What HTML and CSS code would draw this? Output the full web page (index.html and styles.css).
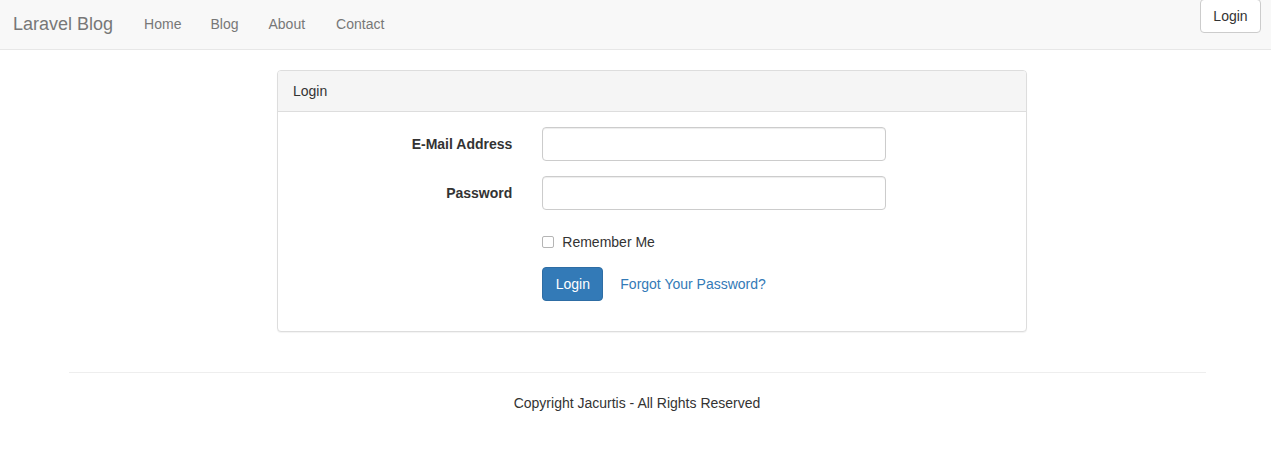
FILE: index.html
```html
<!DOCTYPE html>
<html>
<head>
<meta charset="utf-8">
<link rel="stylesheet" href="styles.css">
</head>
<body>
<nav class="navbar">
  <div class="nav-left">
    <a class="brand" href="#">Laravel Blog</a>
    <a class="nav-link" href="#">Home</a>
    <a class="nav-link" href="#">Blog</a>
    <a class="nav-link" href="#">About</a>
    <a class="nav-link" href="#">Contact</a>
  </div>
  <a class="btn btn-default nav-login" href="#">Login</a>
</nav>

<main class="main">
  <div class="panel">
    <div class="panel-heading">Login</div>
    <div class="panel-body">
      <form class="form">
        <div class="form-group">
          <label class="control-label">E-Mail Address</label>
          <div class="field"><input class="form-control" type="email"></div>
        </div>
        <div class="form-group">
          <label class="control-label">Password</label>
          <div class="field"><input class="form-control" type="password"></div>
        </div>
        <div class="form-group">
          <div class="spacer"></div>
          <div class="field checkbox">
            <label><input type="checkbox" class="check"> Remember Me</label>
          </div>
        </div>
        <div class="form-group">
          <div class="spacer"></div>
          <div class="field buttons">
            <button type="button" class="btn btn-primary">Login</button>
            <a class="btn btn-link" href="#">Forgot Your Password?</a>
          </div>
        </div>
      </form>
    </div>
  </div>
</main>

<footer class="footer">
  <hr class="rule">
  <p class="copy">Copyright Jacurtis - All Rights Reserved</p>
</footer>
</body>
</html>
```

FILE: styles.css
```css
* { box-sizing: border-box; }
html, body { margin: 0; padding: 0; }
body {
  font-family: "Liberation Sans", Arial, Helvetica, sans-serif;
  font-size: 14px;
  line-height: 20px;
  color: #333;
  background: #fff;
}
a { text-decoration: none; }

.navbar {
  height: 50px;
  background: #f8f8f8;
  border-bottom: 1px solid #e7e7e7;
  display: flex;
  justify-content: space-between;
  align-items: flex-start;
  margin-bottom: 20px;
}
.nav-left { display: flex; align-items: flex-start; padding-top: 14px; }
.brand {
  font-size: 18px;
  color: #777;
  padding: 0 15px 0 0;
  margin-left: 13px;
  line-height: 20px;
}
.nav-link {
  color: #777;
  padding: 0 15px;
  line-height: 20px;
}
.brand + .nav-link { padding-left: 16px; padding-right: 14px; }
.nav-link:nth-child(3) { padding-left: 15px; }
.nav-link:nth-child(4) { padding-left: 15px; padding-right: 16px; }
.nav-link:nth-child(5) { padding-left: 15px; }

.btn {
  display: inline-block;
  height: 34px;
  padding: 6px 12px;
  font-size: 14px;
  line-height: 20px;
  border: 1px solid transparent;
  border-radius: 4px;
  font-family: inherit;
  cursor: pointer;
}
.btn-default {
  color: #333;
  background: #fff;
  border-color: #ccc;
}
.nav-login {
  margin-top: -1px;
  margin-right: 10px;
  width: 61px;
  padding: 6px 0;
  text-align: center;
}
.btn-primary {
  color: #fff;
  background: #337ab7;
  border-color: #2e6da4;
  width: 61px;
  padding: 6px 0;
}
.btn-link {
  color: #337ab7;
  background: transparent;
  padding: 6px 12px;
  margin-left: 4px;
}

.main { display: flex; justify-content: center; padding-left: 33px; }
.panel {
  width: 750px;
  border: 1px solid #ddd;
  border-radius: 4px;
  background: #fff;
  box-shadow: 0 1px 1px rgba(0,0,0,0.05);
  margin-bottom: 20px;
}
.panel-heading {
  background: #f5f5f5;
  border-bottom: 1px solid #ddd;
  padding: 10px 15px;
  border-radius: 3px 3px 0 0;
  color: #333;
}
.panel-body { padding: 15px 0; }

.form-group { display: flex; margin-bottom: 15px; }
.control-label, .spacer {
  width: 249.3px;
  padding: 7px 15px 0;
  text-align: right;
  font-weight: bold;
  flex: none;
}
.field { width: 374px; padding: 0 15px; flex: none; }
.form-control {
  display: block;
  width: 100%;
  height: 34px;
  border: 1px solid #ccc;
  border-radius: 4px;
  box-shadow: inset 0 1px 1px rgba(0,0,0,0.075);
  padding: 6px 12px;
  font-size: 14px;
  font-family: inherit;
  background: #fff;
}
.checkbox { padding-top: 7px; min-height: 27px; }
.checkbox label { position: relative; display: block; padding-left: 20px; }
.check {
  appearance: none;
  -webkit-appearance: none;
  position: absolute;
  left: 0;
  top: 4px;
  width: 12px;
  height: 12px;
  margin: 0;
  border: 1px solid #b5b5b5;
  border-radius: 2px;
  background: #fff;
}
.buttons { display: flex; align-items: center; }

.footer { width: 1140px; margin: 0 auto; padding-left: 3px; }
.rule {
  border: 0;
  border-top: 1px solid #eee;
  margin: 20px 0 20px 0;
  height: 0;
}
.copy { text-align: center; margin: 0; padding-left: 0; }
```
